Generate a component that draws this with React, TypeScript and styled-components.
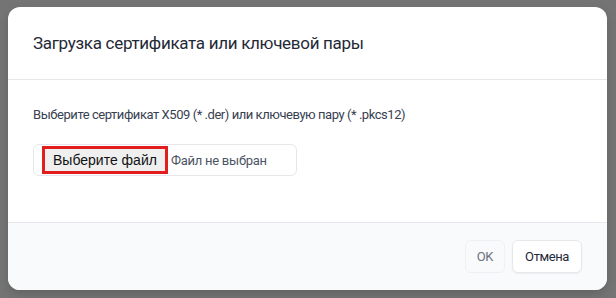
import styled, { createGlobalStyle } from 'styled-components'

const Global = createGlobalStyle`
    html, body {
        margin: 0;
        padding: 0;
        background: #747474;
    }
    body {
        font-family: Roboto, "Noto Sans", sans-serif;
    }
`

export default function App() {
    return (
        <>
            <Global />
            <Page>
                <Dialog>
                    <Header>
                        <Title>Загрузка сертификата или ключевой пары</Title>
                    </Header>
                    <Body>
                        <Hint>Выберите сертификат X509 (* .der) или ключевую пару (* .pkcs12)</Hint>
                        <FileBox>
                            <PickButton>Выберите файл</PickButton>
                            <FileName>Файл не выбран</FileName>
                        </FileBox>
                    </Body>
                    <Footer>
                        <Button disabled>OK</Button>
                        <Button>Отмена</Button>
                    </Footer>
                </Dialog>
            </Page>
        </>
    )
}

const Page = styled.div`
    width: 616px;
    height: 298px;
    box-sizing: border-box;
    padding: 7px 9px 8px 8px;
`

const Dialog = styled.div`
    width: 599px;
    height: 283px;
    background: #ffffff;
    border-radius: 12px;
    overflow: hidden;
    display: flex;
    flex-direction: column;
    box-shadow: 0 4px 10px rgba(0, 0, 0, 0.15);
`

const Header = styled.div`
    height: 73px;
    box-sizing: border-box;
    border-bottom: 1px solid #e5e7eb;
    display: flex;
    align-items: center;
    padding: 0 25px;
`

const Title = styled.h2`
    margin: 0;
    font-size: 17px;
    font-weight: 400;
    color: #1f2937;
    letter-spacing: -0.3px;
`

const Body = styled.div`
    height: 142px;
    box-sizing: border-box;
    padding: 27px 25px 0 25px;
    display: flex;
    flex-direction: column;
    align-items: flex-start;
    gap: 21px;
`

const Hint = styled.p`
    margin: 0;
    font-size: 13px;
    line-height: 16px;
    color: #374151;
    letter-spacing: -0.45px;
`

const FileBox = styled.div`
    width: 264px;
    height: 32px;
    box-sizing: border-box;
    border: 1px solid #e5e7eb;
    border-radius: 6px;
    display: flex;
    align-items: center;
    padding: 0 8px;
    gap: 3px;
`

const PickButton = styled.button`
    height: 28px;
    box-sizing: border-box;
    padding: 0 8px;
    border: 3px solid #e11d1d;
    background: #efefef;
    font-family: "Liberation Sans", Arial, sans-serif;
    font-size: 14px;
    color: #111111;
`

const FileName = styled.span`
    font-size: 13px;
    color: #4b5563;
    letter-spacing: -0.25px;
`

const Footer = styled.div`
    flex: 1;
    background: #f9fafb;
    border-top: 1px solid #e5e7eb;
    display: flex;
    justify-content: flex-end;
    align-items: flex-start;
    gap: 7px;
    padding: 17px 25px 0 0;
`

const Button = styled.button`
    height: 33px;
    box-sizing: border-box;
    padding: 0 12px;
    border: 1px solid #e5e7eb;
    border-radius: 6px;
    background: #ffffff;
    font-family: Roboto, "Noto Sans", sans-serif;
    font-size: 13px;
    letter-spacing: -0.4px;
    color: #1f2937;
    box-shadow: 0 1px 2px rgba(0, 0, 0, 0.05);

    &:disabled {
        background: #f9fafb;
        color: #6b7280;
        border-color: #eef0f3;
        box-shadow: none;
        padding: 0 11px;
    }
`
